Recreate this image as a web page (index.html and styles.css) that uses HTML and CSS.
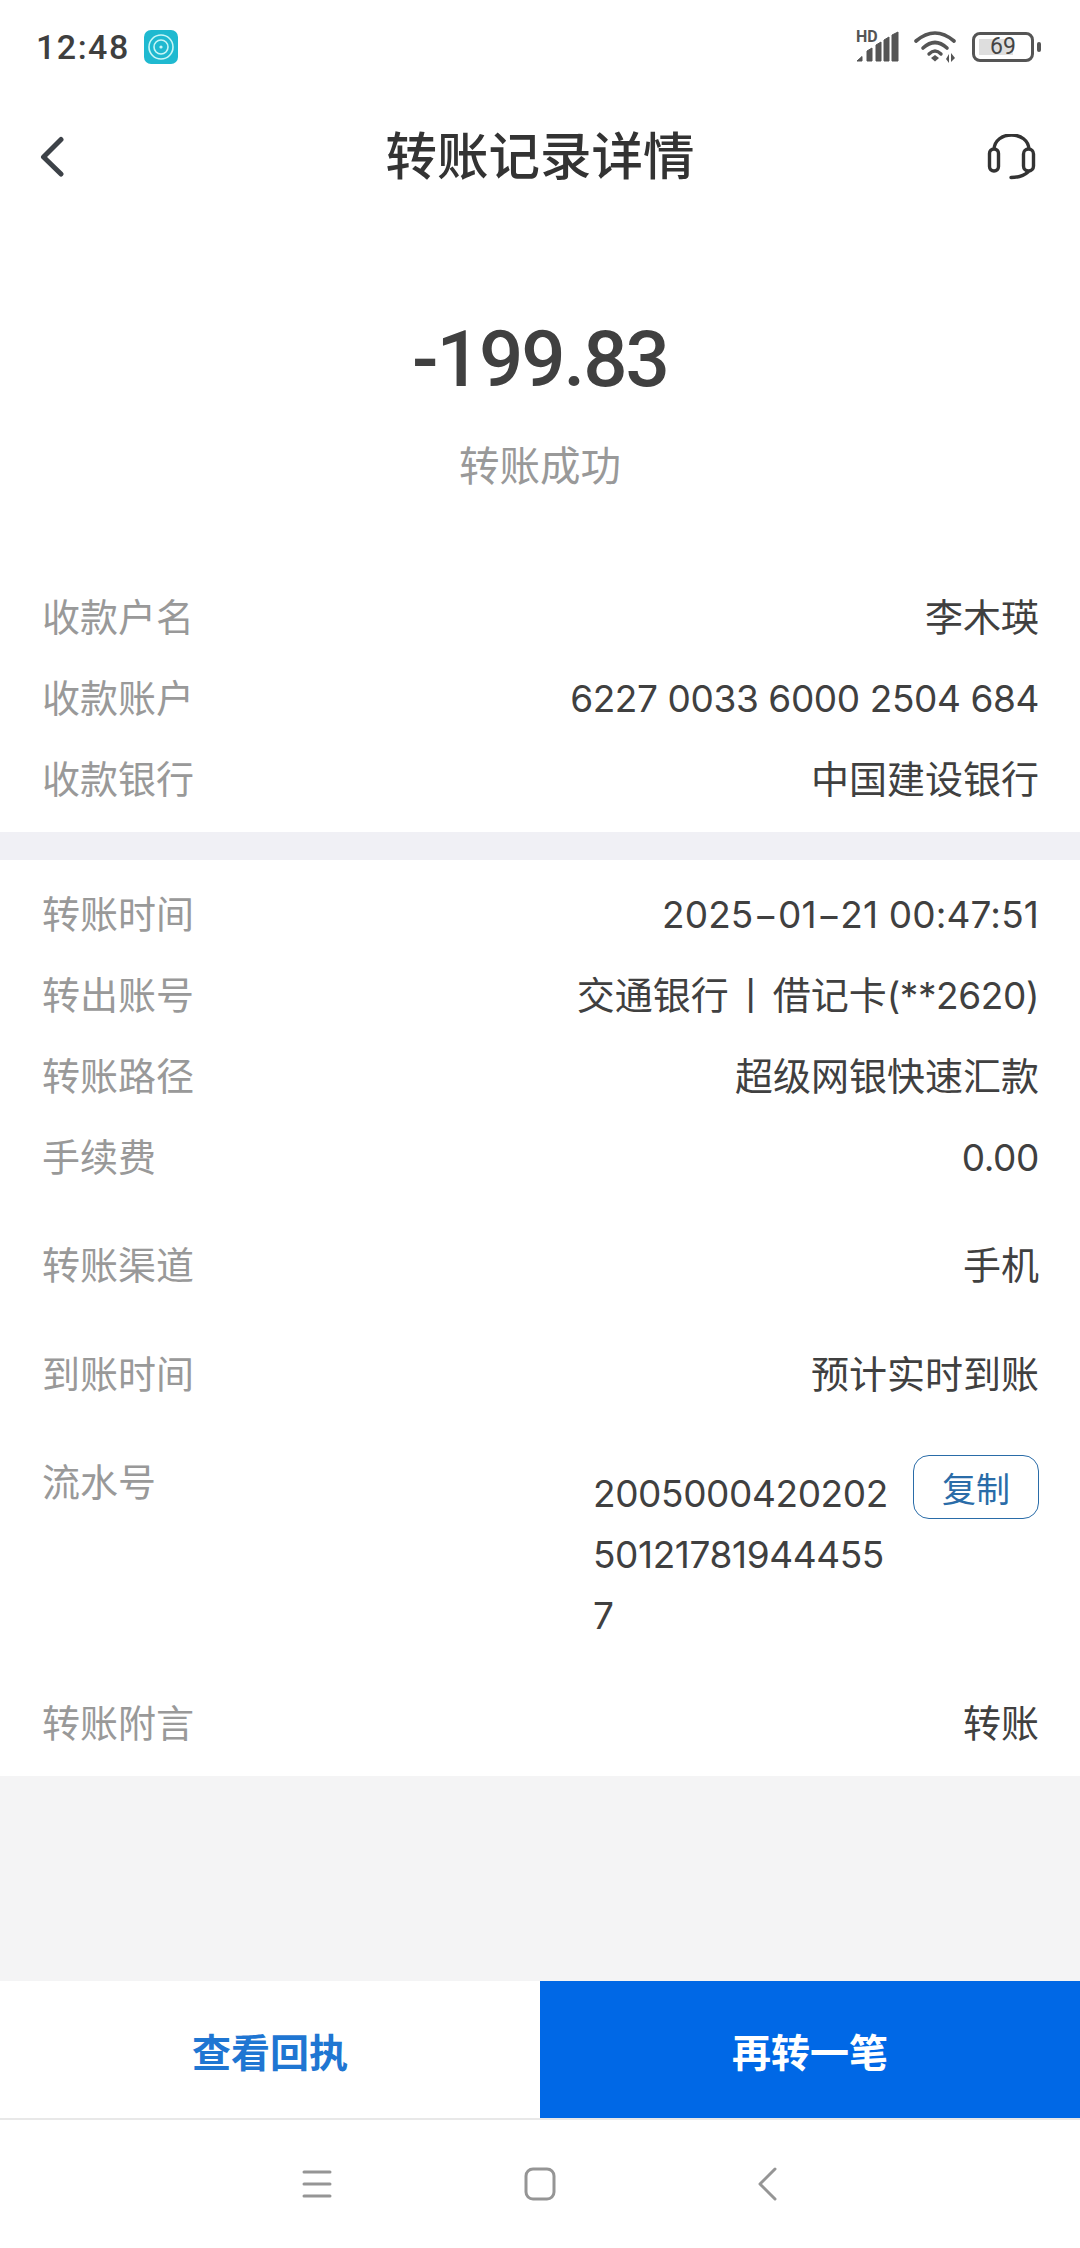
FILE: index.html
```html
<!DOCTYPE html>
<html>
  <head>
    <title>转账记录详情</title>
    <link rel="stylesheet" href="styles.css">
  </head>

  <body>
    <div class="status_bar">
      <span class="status_time">12:48</span>
      <svg class="status_app" width="34" height="34" viewBox="0 0 34 34">
        <rect width="34" height="34" rx="7" fill="#1fb9d0"/>
        <circle cx="17" cy="17" r="12" fill="none" stroke="#c8f6f6" stroke-width="1.6"/>
        <circle cx="17" cy="17" r="7" fill="none" stroke="#c8f6f6" stroke-width="1.6"/>
        <circle cx="17" cy="17" r="1.6" fill="#c8f6f6"/>
      </svg>
      <div class="status_right">
        <svg class="status_signal" width="44" height="38" viewBox="0 -4 44 38">
          <text x="0" y="12" class="status_hd">HD</text>
          <path d="M1 31 L6 26.5 V31 Z M11 31 V21 L16 18 V31 Z M20 31 V15 L25 12 V31 Z M28 31 V10 L33 7 V31 Z M36 31 V5 L42 2 V31 Z" fill="#555" stroke="#555" stroke-width="1" stroke-linejoin="round"/>
        </svg>
        <svg class="status_wifi" width="44" height="34" viewBox="0 0 44 34">
          <path d="M2 11 Q21 -5 40 11" fill="none" stroke="#555" stroke-width="3.6" stroke-linecap="round"/>
          <path d="M9 18 Q21 7 33 18" fill="none" stroke="#555" stroke-width="3.6" stroke-linecap="round"/>
          <path d="M15 24 Q21 18 27 24" fill="none" stroke="#555" stroke-width="3.4" stroke-linecap="round"/>
          <path d="M17 28 L21 25 L25 28 L21 31.5 Z" fill="#555"/>
          <path d="M35 24 V33 L32 29 Z M37 23 V32 L41 28 Z" fill="#555"/>
        </svg>
        <div class="battery">
          <div class="battery_body">
            <div class="battery_fill"></div>
            <span class="battery_num">69</span>
          </div>
          <div class="battery_tip"></div>
        </div>
      </div>
    </div>

    <div class="nav_bar">
      <svg class="nav_back" width="30" height="44" viewBox="0 0 30 44">
        <path d="M26 3.5 L8.5 21 L26 38" fill="none" stroke="#3d4248" stroke-width="5" stroke-linecap="round" stroke-linejoin="round"/>
      </svg>
      <h1 class="nav_title">转账记录详情</h1>
      <svg class="nav_service" width="52" height="48" viewBox="0 0 52 48">
        <path d="M8 16 C8 -4 43 -4 43 16" fill="none" stroke="#333" stroke-width="3.4"/>
        <rect x="3.5" y="15" width="9" height="22" rx="4.5" fill="none" stroke="#333" stroke-width="3.4"/>
        <rect x="37.5" y="15" width="10" height="22" rx="5" fill="none" stroke="#333" stroke-width="3.4"/>
        <path d="M25 43.5 Q36 43.5 42 38" fill="none" stroke="#333" stroke-width="3.4" stroke-linecap="round"/>
      </svg>
    </div>

    <div class="summary">
      <p class="amount">-199.83</p>
      <p class="state">转账成功</p>
    </div>

    <div class="group group_first">
      <div class="row row_a"><span class="label">收款户名</span><span class="value">李木瑛</span></div>
      <div class="row row_a"><span class="label">收款账户</span><span class="value num">6227 0033 6000 2504 684</span></div>
      <div class="row row_a"><span class="label">收款银行</span><span class="value">中国建设银行</span></div>
    </div>

    <div class="band"></div>

    <div class="group group_second">
      <div class="row row_a"><span class="label">转账时间</span><span class="value num num_date">2025−01−21 00:47:51</span></div>
      <div class="row row_a"><span class="label">转出账号</span><span class="value">交通银行<span class="sep">丨</span>借记卡<span class="num">(**2620)</span></span></div>
      <div class="row row_a"><span class="label">转账路径</span><span class="value">超级网银快速汇款</span></div>
      <div class="row row_a"><span class="label">手续费</span><span class="value num">0.00</span></div>
      <div class="row row_b"><span class="label">转账渠道</span><span class="value">手机</span></div>
      <div class="row row_b"><span class="label">到账时间</span><span class="value">预计实时到账</span></div>
      <div class="row row_serial">
        <span class="label label_serial">流水号</span>
        <div class="serial">
          <p class="serial_num num">2005000420202<br>50121781944455<br>7</p>
          <button class="copy_btn">复制</button>
        </div>
      </div>
      <div class="row row_a"><span class="label">转账附言</span><span class="value">转账</span></div>
    </div>

    <div class="filler"></div>

    <div class="actions">
      <div class="action_left">查看回执</div>
      <div class="action_right">再转一笔</div>
    </div>

    <div class="sys_nav">
      <svg width="32" height="32" viewBox="0 0 32 32">
        <path d="M3 4 H29 M3 16 H29 M3 28 H29" stroke="#959595" stroke-width="3" stroke-linecap="round"/>
      </svg>
      <svg width="32" height="34" viewBox="0 0 32 34">
        <rect x="2" y="2" width="28" height="30" rx="7" fill="none" stroke="#959595" stroke-width="3"/>
      </svg>
      <svg class="sys_back" width="20" height="34" viewBox="0 0 20 34">
        <path d="M18 2 L3 17 L18 32" fill="none" stroke="#959595" stroke-width="3" stroke-linecap="round" stroke-linejoin="round"/>
      </svg>
    </div>
  </body>
</html>
```

FILE: styles.css
```css
* {
  box-sizing: border-box;
  font-family: Roboto, "Noto Sans CJK SC", sans-serif;
}

p,
h1 {
  margin: 0;
  padding: 0;
}

body {
  margin: 0;
  width: 1080px;
  height: 2248px;
  background-color: white;
  color: #404040;
  overflow: hidden;
}

.status_bar {
  display: flex;
  align-items: center;
  height: 94px;
  padding: 0 39px 0 36px;
}

.status_time {
  font-size: 34px;
  font-weight: 500;
  letter-spacing: 1.5px;
  color: #3f3f3f;
}

.status_app {
  margin-left: 14px;
}

.status_right {
  display: flex;
  align-items: center;
  gap: 14px;
  margin-left: auto;
}

.status_signal {
  margin-bottom: 4px;
}

.status_hd {
  font-size: 16px;
  font-weight: 700;
  fill: #555;
}

.battery {
  display: flex;
  align-items: center;
  gap: 3px;
}

.battery_body {
  position: relative;
  width: 62px;
  height: 30px;
  border: 3.5px solid #555;
  border-radius: 8px;
  text-align: center;
}

.battery_fill {
  position: absolute;
  left: 4px;
  top: 4px;
  bottom: 4px;
  width: 34px;
  background-color: #dedede;
}

.battery_num {
  position: relative;
  display: block;
  font-size: 23px;
  line-height: 23px;
  color: #444;
}

.battery_tip {
  width: 4px;
  height: 10px;
  border-radius: 2px;
  background-color: #555;
}

.nav_bar {
  display: grid;
  grid-template-columns: 1fr auto 1fr;
  align-items: center;
  height: 128px;
  padding: 0 35px;
}

.nav_service {
  justify-self: end;
  margin-right: 7px;
}

.nav_title {
  font-size: 51.5px;
  font-weight: 500;
  line-height: 60px;
  color: #333;
}

.summary {
  display: flex;
  flex-direction: column;
  align-items: center;
  padding-top: 92px;
}

.amount {
  font-size: 78px;
  line-height: 92px;
  font-weight: 500;
  letter-spacing: -2px;
  color: #404040;
}

.state {
  margin-top: 38px;
  font-size: 40.5px;
  line-height: 46px;
  color: #999;
}

.group {
  padding: 0 41px 11px 42px;
}

.group_first {
  padding-top: 88px;
}

.group_second {
  padding-top: 15px;
}

.row {
  display: flex;
  justify-content: space-between;
  font-size: 38px;
  line-height: 46px;
}

.row_a {
  height: 81px;
  padding-top: 17px;
}

.row_b {
  height: 109px;
  padding-top: 30px;
}

.row_a + .row_b {
  margin-top: 14px;
}

.label {
  color: #999;
}

.label_serial {
  margin-top: 5px;
}

.value {
  color: #404040;
}

.num {
  font-family: Inter, Roboto, sans-serif;
  font-size: 37px;
  letter-spacing: -0.4px;
}

.num_date {
  letter-spacing: 0.15px;
}

.sep {
  margin: 0 3px;
}

.band {
  height: 28px;
  background-color: #f0f0f5;
}

.row_serial {
  height: 253px;
  padding-top: 24px;
}

.serial {
  display: flex;
  align-items: flex-start;
}

.serial_num {
  width: 320px;
  margin-top: 8px;
  line-height: 61px;
  color: #404040;
}

.copy_btn {
  width: 126px;
  height: 64px;
  padding: 0;
  border: 1.5px solid #2a6ca8;
  border-radius: 16px;
  background-color: white;
  color: #2a6ca8;
  font-size: 34px;
}

.filler {
  height: 205px;
  background-color: #f4f4f5;
}

.actions {
  display: flex;
  height: 137px;
  font-size: 39px;
  font-weight: 700;
}

.action_left {
  display: flex;
  align-items: center;
  justify-content: center;
  width: 540px;
  color: #1f76d2;
}

.action_right {
  display: flex;
  align-items: center;
  justify-content: center;
  width: 540px;
  background-color: #0068e6;
  color: white;
}

.sys_nav {
  display: flex;
  align-items: center;
  gap: 191px;
  height: 130px;
  padding-left: 301px;
  border-top: 2px solid #e8e8e8;
}

.sys_back {
  margin-left: 10px;
}
```
